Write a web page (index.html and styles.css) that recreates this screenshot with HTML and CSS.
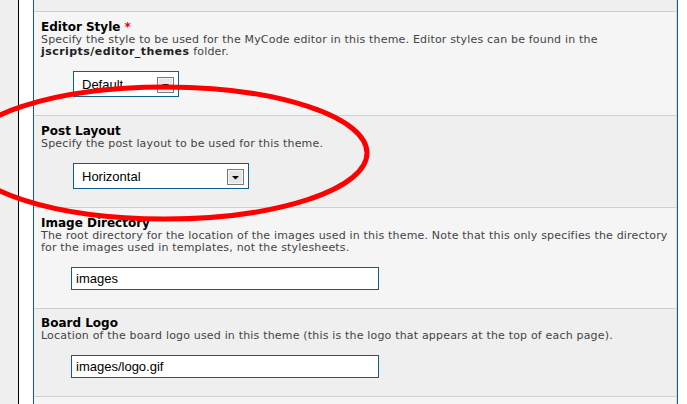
FILE: index.html
```html
<!DOCTYPE html>
<html>
<head>
<meta charset="utf-8">
<link rel="stylesheet" href="styles.css">
</head>
<body>
<div class="page">
  <div class="panel">
    <div class="table">
      <div class="row row-dark row-top"></div>
      <div class="row row-light">
        <div class="title">Editor Style <span class="req">*</span></div>
        <div class="desc">Specify the style to be used for the MyCode editor in this theme. Editor styles can be found in the<br><strong>jscripts/editor_themes</strong> folder.</div>
        <div class="form-row">
          <div class="select sel-editor">
            <span class="value">Default</span>
            <svg class="drop" width="17" height="16" viewBox="0 0 17 16"><rect x="0.5" y="0.5" width="16" height="15" fill="#e6e6e6" stroke="#7a7a7a"/><rect x="1.5" y="1.5" width="14" height="13" fill="none" stroke="#f4f4f4"/><path d="M5 7 H12 L8.5 10.5 Z" fill="#000"/></svg>
          </div>
        </div>
      </div>
      <div class="row row-dark">
        <div class="title">Post Layout</div>
        <div class="desc">Specify the post layout to be used for this theme.</div>
        <div class="form-row">
          <div class="select sel-layout">
            <span class="value">Horizontal</span>
            <svg class="drop" width="17" height="16" viewBox="0 0 17 16"><rect x="0.5" y="0.5" width="16" height="15" fill="#e6e6e6" stroke="#7a7a7a"/><rect x="1.5" y="1.5" width="14" height="13" fill="none" stroke="#f4f4f4"/><path d="M5 7 H12 L8.5 10.5 Z" fill="#000"/></svg>
          </div>
        </div>
      </div>
      <div class="row row-light">
        <div class="title">Image Directory</div>
        <div class="desc">The root directory for the location of the images used in this theme. Note that this only specifies the directory<br>for the images used in templates, not the stylesheets.</div>
        <div class="form-row form-row-input">
          <input class="text-input" type="text" value="images">
        </div>
      </div>
      <div class="row row-dark row-logo">
        <div class="title">Board Logo</div>
        <div class="desc">Location of the board logo used in this theme (this is the logo that appears at the top of each page).</div>
        <div class="form-row form-row-input">
          <input class="text-input" type="text" value="images/logo.gif">
        </div>
      </div>
      <div class="row row-light row-last"></div>
    </div>
  </div>
  <svg class="ellipse" width="687" height="404" viewBox="0 0 687 404"><ellipse cx="165" cy="153" rx="202" ry="66" fill="none" stroke="#f00" stroke-width="5"/></svg>
</div>
</body>
</html>
```
FILE: styles.css
```css
html, body {
  margin: 0;
  padding: 0;
}
body {
  background: #f0f0f0;
  font-family: "DejaVu Sans", Verdana, sans-serif;
  width: 687px;
  height: 404px;
  overflow: hidden;
}
.page {
  position: relative;
  height: 404px;
  padding-left: 18px;
}
.panel {
  background: #fff;
  border-left: 1px solid #000;
  height: 404px;
  padding-left: 14px;
  padding-right: 9px;
}
.table {
  border-left: 1px solid #0f5c8e;
  border-right: 1px solid #0f5c8e;
  height: 404px;
  background: #f5f5f5;
}
.row {
  border-bottom: 1px solid #d0d0d0;
  border-right: 1px solid #d8d8d8;
  padding: 8px 7px 18px 7px;
}
.row-top {
  height: 11px;
  padding: 0;
}
.row-logo {
  padding-top: 7px;
}
.row-last {
  height: 20px;
  padding: 0;
  border-bottom: none;
}
.row-light { background: #f5f5f5; }
.row-dark { background: #efefef; }
.title {
  font-weight: bold;
  font-size: 12px;
  line-height: 14px;
  color: #000;
}
.req { color: #e00; }
.desc {
  font-size: 11px;
  line-height: 12px;
  color: #444;
  letter-spacing: 0.18px;
}
.desc strong { color: #222; letter-spacing: 0.45px; }
.form-row {
  margin-top: 13px;
  padding-left: 32px;
}
.form-row-input {
  padding-left: 30px;
}
.select {
  display: flex;
  align-items: center;
  box-sizing: border-box;
  height: 26px;
  background: #fff;
  border: 1px solid #0f5c8e;
  padding: 0 4px 0 8px;
  font-family: "Liberation Sans", Arial, sans-serif;
  font-size: 13px;
  color: #000;
}
.sel-editor { width: 106px; }
.sel-layout { width: 176px; }
.select .value { flex: 1; }
.select .drop { display: block; margin-top: 1px; }
.text-input {
  display: block;
  box-sizing: border-box;
  width: 308px;
  height: 23px;
  border: 1px solid #0f5c8e;
  background: #fff;
  padding: 0 4px;
  margin: 0;
  font-family: "Liberation Sans", Arial, sans-serif;
  font-size: 13px;
  color: #000;
  outline: none;
}
.ellipse {
  position: absolute;
  left: 0;
  top: 0;
  pointer-events: none;
}
```
